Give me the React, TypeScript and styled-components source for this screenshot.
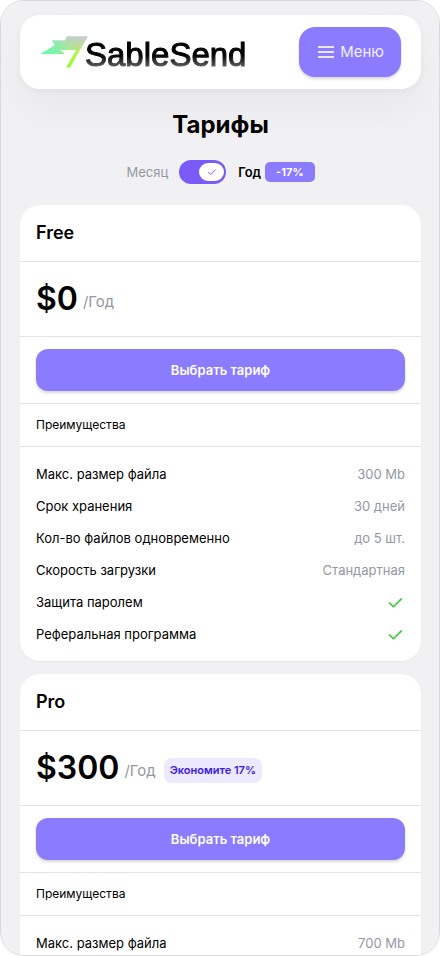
import React, { useState } from "react";
import styled, { createGlobalStyle } from "styled-components";

const GlobalStyle = createGlobalStyle`
  *, *::before, *::after { box-sizing: border-box; }
  html, body { margin: 0; padding: 0; background: #fff; }
  body, button, input {
    font-family: Inter, "Liberation Sans", sans-serif;
  }
  h1, h2, h3, p, ul, dl, dd { margin: 0; padding: 0; }
`;

const Screen = styled.div`
  height: 100vh;
  overflow-x: hidden;
  overflow-y: auto;
  scrollbar-width: none;
  padding: 14px 18px 0 19px;
  border: 1px solid #d9d9db;
  border-radius: 24px;
  background: #f1f1f3;
  color: #000;
`;

const Header = styled.header`
  display: flex;
  align-items: center;
  justify-content: space-between;
  padding: 12px 20px;
  border-radius: 20px;
  background: #fff;
  box-shadow: 0 20px 40px rgba(0, 0, 0, 0.04), 0 2px 6px rgba(0, 0, 0, 0.04);
`;

const Brand = styled.a`
  display: flex;
  align-items: center;
  text-decoration: none;
`;

const Mark = styled.svg`
  display: block;
  width: 48px;
  height: 32px;
  margin-right: -3px;
`;

const BrandName = styled.span`
  margin-top: 5px;
  font-family: "Liberation Sans", Arial, sans-serif;
  font-size: 33px;
  line-height: 40px;
  -webkit-text-stroke: 1px transparent;
  color: transparent;
  background: linear-gradient(#000 50%, #777 88%);
  -webkit-background-clip: text;
  background-clip: text;
`;

const MenuButton = styled.button`
  display: flex;
  align-items: center;
  justify-content: center;
  gap: 5px;
  height: 50px;
  padding: 0 17px 0 18px;
  border: 0;
  border-radius: 16px;
  background: #8a7bff;
  color: #f1efff;
  font-size: 15px;
  line-height: 20px;
  box-shadow: 0 2px 3px rgba(0, 0, 0, 0.16);
  cursor: pointer;
`;

const Title = styled.h1`
  margin-top: 20px;
  font-size: 24px;
  line-height: 32px;
  font-weight: 700;
  text-align: center;
`;

const PeriodSwitch = styled.div`
  display: flex;
  align-items: center;
  justify-content: center;
  height: 24px;
  margin-top: 19px;
  font-size: 13px;
  line-height: 20px;
`;

const PeriodLabel = styled.span<{ $active: boolean }>`
  color: ${(p) => (p.$active ? "#000" : "#9498a3")};
  font-weight: ${(p) => (p.$active ? 600 : 400)};
`;

const Toggle = styled.label`
  position: relative;
  display: block;
  width: 47px;
  height: 24px;
  margin: 0 12px 0 11px;
  cursor: pointer;
`;

const ToggleInput = styled.input`
  position: absolute;
  inset: 0;
  width: 100%;
  height: 100%;
  margin: 0;
  opacity: 0;
  cursor: pointer;
`;

const ToggleTrack = styled.span<{ $on: boolean }>`
  display: flex;
  align-items: center;
  justify-content: ${(p) => (p.$on ? "flex-end" : "flex-start")};
  height: 100%;
  padding: 0 2px;
  border-radius: 12px;
  background: ${(p) => (p.$on ? "#7b5bf8" : "#b9bcc6")};
`;

const Knob = styled.span`
  display: flex;
  align-items: center;
  justify-content: center;
  width: 25px;
  height: 18px;
  border-radius: 9px;
  background: #fff;
`;

const Discount = styled.span`
  margin-left: 4px;
  padding: 0 11px;
  border-radius: 5px;
  background: #8a7bff;
  color: #fff;
  font-size: 11px;
  line-height: 20px;
  font-weight: 700;
`;

const Plans = styled.main`
  display: grid;
  gap: 13px;
  margin-top: 21px;
`;

const Card = styled.article`
  border-radius: 20px;
  background: #fff;
  box-shadow: 0 1px 2px rgba(0, 0, 0, 0.04);
`;

const Section = styled.div`
  padding: 12px 16px;
  border-bottom: 1px solid #e4e4e7;
`;

const PlanName = styled.h2`
  font-size: 18px;
  line-height: 32px;
  font-weight: 600;
`;

const PriceRow = styled.div`
  display: flex;
  align-items: center;
  height: 50px;
`;

const Price = styled.span`
  font-size: 32px;
  line-height: 50px;
  font-weight: 600;
`;

const Per = styled.span`
  margin: 5px 0 0 5px;
  color: #9498a3;
  font-size: 15px;
  line-height: 25px;
`;

const Saving = styled.span`
  margin: 5px 0 0 8px;
  padding: 0 6px;
  border-radius: 8px;
  background: #ede9fe;
  color: #3b19e6;
  font-size: 11px;
  line-height: 25px;
  font-weight: 600;
`;

const SelectButton = styled.button`
  display: block;
  width: 100%;
  height: 42px;
  border: 0;
  border-radius: 12px;
  background: #8a7bff;
  color: #fff;
  font-size: 13px;
  font-weight: 600;
  box-shadow: 0 2px 3px rgba(0, 0, 0, 0.16);
  cursor: pointer;
`;

const BenefitsTitle = styled.h3`
  font-size: 12px;
  line-height: 18px;
  font-weight: 400;
`;

const Benefits = styled.dl`
  padding: 11px 16px;
`;

const Benefit = styled.div`
  display: flex;
  align-items: center;
  justify-content: space-between;
  height: 32px;
  font-size: 13px;
`;

const BenefitValue = styled.dd`
  display: flex;
  color: #9498a3;
`;

const Included = styled.span`
  display: flex;
  padding-right: 1px;
`;

type Plan = {
  name: string;
  price: string;
  saving?: string;
  size: string;
};

const plans: Plan[] = [
  { name: "Free", price: "$0", size: "300 Mb" },
  { name: "Pro", price: "$300", saving: "Экономите 17%", size: "700 Mb" },
];

function Logo() {
  return (
    <Mark viewBox="0 0 48 32" aria-hidden="true">
      <defs>
        <linearGradient id="mark-base" x1="0" y1="0" x2="0" y2="1">
          <stop offset="0" stopColor="#c6cbd4" />
          <stop offset="0.3" stopColor="#bedd9a" />
          <stop offset="0.55" stopColor="#b4f74c" />
          <stop offset="1" stopColor="#8dff1c" />
        </linearGradient>
        <linearGradient id="mark-mint" gradientUnits="userSpaceOnUse" x1="2" y1="20" x2="38" y2="6">
          <stop offset="0" stopColor="#5cfab4" />
          <stop offset="0.45" stopColor="#80f0b4" stopOpacity="0.85" />
          <stop offset="1" stopColor="#a8e0a8" stopOpacity="0" />
        </linearGradient>
      </defs>
      <path
        fill="url(#mark-base)"
        d="M0.5 18 15 9.3 12 4.4H25L27 0.2H48L29.8 31.6H26.2L36 14H20L25 18Z"
      />
      <path
        fill="url(#mark-mint)"
        d="M0.5 18 15 9.3 12 4.4H25L27 0.2H48L40 14H20L25 18Z"
      />
    </Mark>
  );
}

function Check({ size, color, width }: { size: number; color: string; width: number }) {
  return (
    <svg width={size} height={size} viewBox="0 0 16 16" fill="none" aria-hidden="true">
      <path
        d="M2.5 8.5 6 12 13.5 4.5"
        stroke={color}
        strokeWidth={width}
        strokeLinecap="round"
        strokeLinejoin="round"
      />
    </svg>
  );
}

function PlanCard({ plan, period }: { plan: Plan; period: string }) {
  const rows: [string, string | null][] = [
    ["Макс. размер файла", plan.size],
    ["Срок хранения", "30 дней"],
    ["Кол-во файлов одновременно", "до 5 шт."],
    ["Скорость загрузки", "Стандартная"],
    ["Защита паролем", null],
    ["Реферальная программа", null],
  ];
  return (
    <Card>
      <Section>
        <PlanName>{plan.name}</PlanName>
      </Section>
      <Section>
        <PriceRow>
          <Price>{plan.price}</Price>
          <Per>/{period}</Per>
          {plan.saving && <Saving>{plan.saving}</Saving>}
        </PriceRow>
      </Section>
      <Section>
        <SelectButton type="button">Выбрать тариф</SelectButton>
      </Section>
      <Section>
        <BenefitsTitle>Преимущества</BenefitsTitle>
      </Section>
      <Benefits>
        {rows.map(([label, value]) => (
          <Benefit key={label}>
            <dt>{label}</dt>
            <BenefitValue>
              {value ?? (
                <Included role="img" aria-label="Да">
                  <Check size={17} color="#45c63a" width={1.6} />
                </Included>
              )}
            </BenefitValue>
          </Benefit>
        ))}
      </Benefits>
    </Card>
  );
}

export default function App() {
  const [yearly, setYearly] = useState(true);
  return (
    <>
      <GlobalStyle />
      <Screen>
        <Header>
          <Brand href="#">
            <Logo />
            <BrandName>SableSend</BrandName>
          </Brand>
          <MenuButton type="button">
            <svg width="18" height="14" viewBox="0 0 18 14" aria-hidden="true">
              <path d="M1 2H17M1 7H17M1 12H17" stroke="#e9e6ff" strokeWidth="2" />
            </svg>
            Меню
          </MenuButton>
        </Header>
        <Title>Тарифы</Title>
        <PeriodSwitch>
          <PeriodLabel $active={!yearly}>Месяц</PeriodLabel>
          <Toggle>
            <ToggleInput
              type="checkbox"
              aria-label="Годовая оплата"
              checked={yearly}
              onChange={(e) => setYearly(e.target.checked)}
            />
            <ToggleTrack $on={yearly}>
              <Knob>{yearly && <Check size={10} color="#7b5bf8" width={1.6} />}</Knob>
            </ToggleTrack>
          </Toggle>
          <PeriodLabel $active={yearly}>Год</PeriodLabel>
          <Discount>-17%</Discount>
        </PeriodSwitch>
        <Plans>
          {plans.map((plan) => (
            <PlanCard key={plan.name} plan={plan} period={yearly ? "Год" : "Месяц"} />
          ))}
        </Plans>
      </Screen>
    </>
  );
}
